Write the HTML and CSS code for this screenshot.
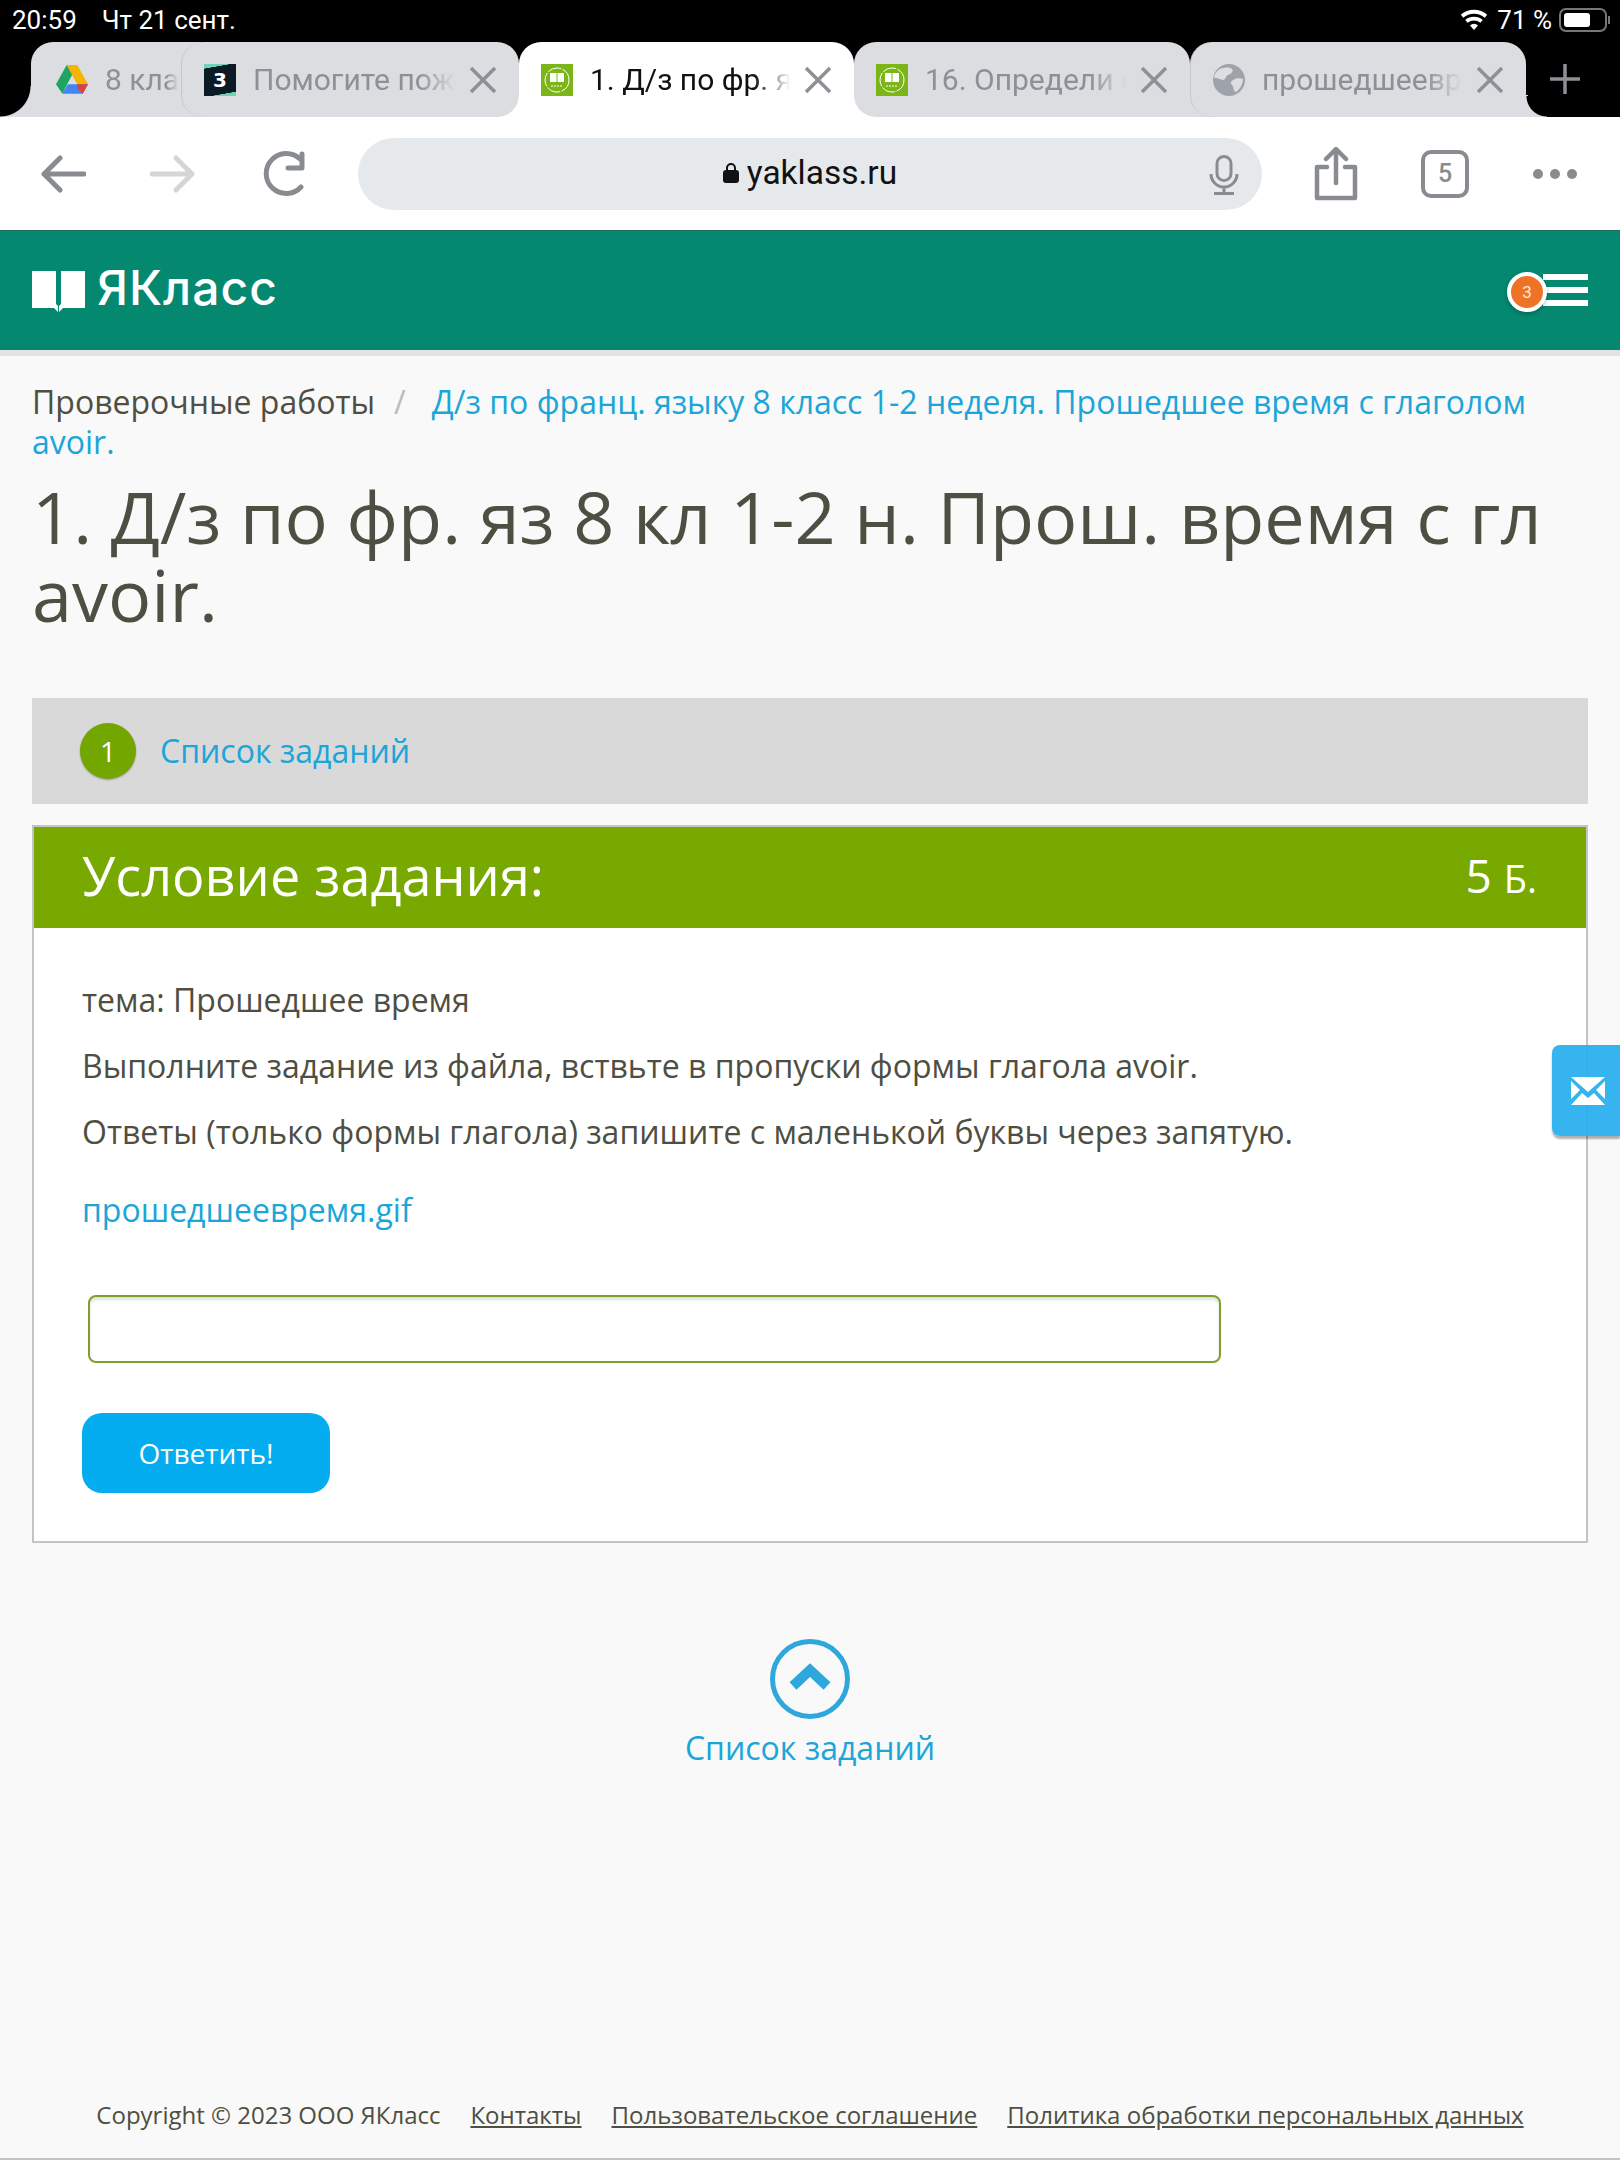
FILE: index.html
```html
<!DOCTYPE html>
<html lang="ru">
<head>
    <meta charset="UTF-8">
    <title>1. Д/з по фр. яз 8 кл 1-2 н. Прош. время с гл avoir.</title>
    <link rel="stylesheet" href="styles.css">
</head>
<body>

<div class="status-bar">
    <div class="status-left"><span>20:59</span><span>Чт 21 сент.</span></div>
    <div class="status-right">
        <svg class="wifi" viewBox="0 0 28 22"><path d="M14 21l-4-4.6a6 6 0 0 1 8 0zM7.700 13.800l-2.500-2.900a13.500 13.500 0 0 1 17.600 0l-2.500 2.900a9.600 9.600 0 0 0-12.600 0zM3.300 8.700L.8 5.800a20 20 0 0 1 26.400 0l-2.500 2.900a16.200 16.200 0 0 0-21.400 0z" fill="#fff"/></svg>
        <span>71 %</span>
        <div class="battery"><div class="battery-level"></div></div>
        <div class="battery-tip"></div>
    </div>
</div>

<div class="tab-strip">
    <div class="tab tab-first">
        <svg class="favicon" viewBox="0 0 30 28">
            <path d="M10 0h10L15 10 9.500 18z" fill="#f4b400"/>
            <path d="M20 0l10 18H20L10 0z" fill="#f4b400"/>
            <path d="M10 0l5 9-9 18-6-9z" fill="#1fa463"/>
            <path d="M6 27l5-9h19l-5 9z" fill="#4285f4"/>
            <path d="M20 18h10l-5 9-5-5z" fill="#db4437"/>
        </svg>
        <span class="tab-title">8 класс</span>
    </div>
    <div class="tab tab-second">
        <div class="favicon-znan"><span>3</span></div>
        <span class="tab-title">Помогите пожалуйста</span>
        <svg class="tab-close" viewBox="0 0 28 28"><path d="M2 2l24 24M26 2L2 26"/></svg>
    </div>
    <div class="tab tab-active">
        <svg class="favicon" viewBox="0 0 32 32">
            <rect width="32" height="32" fill="#7cb518"/>
            <circle cx="16" cy="16" r="12" fill="none" stroke="#fff" stroke-dasharray="14 1.500"/>
            <path d="M9 9h6.500v9H9zM16.500 9H23v9h-6.500z" fill="#fff"/>
            <path d="M10 22h12" stroke="#fff" stroke-dasharray="2 1"/>
        </svg>
        <span class="tab-title">1. Д/з по фр. яз 8 кл</span>
        <svg class="tab-close" viewBox="0 0 28 28"><path d="M2 2l24 24M26 2L2 26"/></svg>
    </div>
    <div class="tab">
        <svg class="favicon" viewBox="0 0 32 32">
            <rect width="32" height="32" fill="#7cb518"/>
            <circle cx="16" cy="16" r="12" fill="none" stroke="#fff" stroke-dasharray="14 1.500"/>
            <path d="M9 9h6.500v9H9zM16.500 9H23v9h-6.500z" fill="#fff"/>
            <path d="M10 22h12" stroke="#fff" stroke-dasharray="2 1"/>
        </svg>
        <span class="tab-title">16. Определи форму</span>
        <svg class="tab-close" viewBox="0 0 28 28"><path d="M2 2l24 24M26 2L2 26"/></svg>
    </div>
    <div class="tab tab-last">
        <svg class="favicon" viewBox="0 0 32 32">
            <circle cx="16" cy="16" r="16" fill="#9ea3aa"/>
            <path d="M7 5c5-2 10-2 12 0s-1 5-4 6-2 5-5 5-7-3-9-2c0-4 3-7 6-9zM20 16c3-2 7-2 10-1 0 5-3 10-7 13-3-1-2-5-4-7s-1-4 1-5z" fill="#dcdee1"/>
        </svg>
        <span class="tab-title">прошедшеевремя.gif</span>
        <svg class="tab-close" viewBox="0 0 28 28"><path d="M2 2l24 24M26 2L2 26"/></svg>
    </div>
    <svg class="tab-new" viewBox="0 0 30 30"><path d="M15 0v30M0 15h30"/></svg>
</div>

<div class="toolbar">
    <svg class="tool tool-back" viewBox="0 0 46 38"><path d="M44 19H4M20 3L4 19l16 16"/></svg>
    <svg class="tool tool-forward" viewBox="0 0 46 38"><path d="M2 19h40M26 3l16 16-16 16"/></svg>
    <svg class="tool tool-reload" viewBox="0 0 48 46"><path d="M41 36a20 20 0 1 1-1-28M42 3v14H28"/></svg>
    <div class="address-bar">
        <div class="address-text">
            <svg class="lock" viewBox="0 0 16 21"><path d="M4 9V6a4 4 0 0 1 8 0v3" fill="none" stroke="#111" stroke-width="2"/><rect y="8" width="16" height="13" rx="3" fill="#111"/></svg>
            <span>yaklass.ru</span>
        </div>
        <svg class="mic" viewBox="0 0 30 40"><rect x="8" y="1.500" width="14" height="24" rx="7"/><path d="M2 19a13 13 0 0 0 26 0M15 32v6M5 38.500h20"/></svg>
    </div>
    <svg class="tool tool-share" viewBox="0 0 44 54"><path d="M13 20H3v31h38V20H31M22 36V3M12 12l10-10 10 10"/></svg>
    <div class="tab-count">5</div>
    <div class="dots"><i></i><i></i><i></i></div>
</div>

<header class="site-header">
    <div class="logo">
        <svg class="logo-book" viewBox="0 0 53 42"><path d="M0 1h24v33l2 2v6l-4-4H0zM29 1h24v37H31l-4 4v-6l2-2z" fill="#fff"/></svg>
        <span class="logo-text">ЯКласс</span>
    </div>
    <div class="menu">
        <div class="menu-badge">3</div>
        <div class="menu-bars"><i></i><i></i><i></i></div>
    </div>
</header>

<main class="content">
    <div class="breadcrumb">
        <span>Проверочные работы</span><span class="breadcrumb-sep">/</span><a href="#">Д/з по франц. языку 8 класс 1-2 неделя. Прошедшее время с глаголом avoir.</a>
    </div>
    <h1 class="page-title">1. Д/з по фр. яз 8 кл 1-2 н. Прош. время с гл avoir.</h1>

    <div class="task-list">
        <div class="task-number">1</div>
        <a href="#">Список заданий</a>
    </div>

    <section class="task-card">
        <div class="task-head">
            <h2>Условие задания:</h2>
            <div class="task-points">5 <small>Б.</small></div>
        </div>
        <div class="task-body">
            <p>тема: Прошедшее время</p>
            <p>Выполните задание из файла, вствьте в пропуски формы глагола avoir.</p>
            <p>Ответы (только формы глагола) запишите с маленькой буквы через запятую.</p>
            <a class="file-link" href="#">прошедшеевремя.gif</a>
            <input class="answer" type="text">
            <button class="answer-btn" type="button">Ответить!</button>
        </div>
    </section>

    <a class="back-up" href="#">
        <svg viewBox="0 0 80 80"><circle cx="40" cy="40" r="37.500" fill="none" stroke="#2ea7dc" stroke-width="5"/><path d="M23 47l17-16 17 16" fill="none" stroke="#2ea7dc" stroke-width="10"/></svg>
        <span>Список заданий</span>
    </a>
</main>

<footer class="site-footer">
    <span>Copyright © 2023 ООО ЯКласс</span>
    <a href="#">Контакты</a>
    <a href="#">Пользовательское соглашение</a>
    <a href="#">Политика обработки персональных данных</a>
</footer>

<div class="mail-tab">
    <svg viewBox="0 0 34 28"><path d="M0 0h34L17 15zM0 4l9 9-9 9zM34 4v18l-9-9zM0 28l11-12 6 5 6-5 11 12z" fill="#fff"/></svg>
</div>

</body>
</html>
```

FILE: styles.css
```css
* {
    box-sizing: border-box;
}
html, body {
    margin: 0;
    padding: 0;
}
body {
    position: relative;
    display: flex;
    flex-direction: column;
    min-height: 2160px;
    background-color: #f9f9f9;
    color: #4e4e42;
    font-family: "Open Sans", sans-serif;
    font-size: 32px;
}
a {
    color: #1ba5d8;
    text-decoration: none;
}

/* ios status bar */
.status-bar {
    display: flex;
    justify-content: space-between;
    align-items: center;
    height: 42px;
    padding: 0 10px 2px 12px;
    background-color: #000;
    color: #fff;
    font-family: Roboto, sans-serif;
    font-size: 26px;
}
.status-left {
    display: flex;
    gap: 25px;
}
.status-right {
    display: flex;
    align-items: center;
    gap: 6px;
}
.wifi {
    width: 28px;
    height: 22px;
    margin-right: 3px;
}
.battery {
    width: 48px;
    height: 24px;
    padding: 3px;
    margin-left: 1px;
    border: 2px solid #777;
    border-radius: 7px;
}
.battery-level {
    width: 68%;
    height: 100%;
    background-color: #fff;
    border-radius: 3px;
}
.battery-tip {
    width: 2px;
    height: 8px;
    margin-left: -5px;
    background-color: #777;
}

/* browser tabs: the bottom band of the strip shows behind the rounded tab corners */
.tab-strip {
    position: relative;
    display: flex;
    height: 75px;
    padding-left: 31px;
    background:
        linear-gradient(#000, #000) top / 100% 53px no-repeat,
        linear-gradient(to right, #000 31px, #dcdde1 31px, #dcdde1 497px, #fff 497px, #fff 876px, #dcdde1 876px, #dcdde1 1528px, #000 1528px);
}
.tab {
    position: relative;
    display: flex;
    flex: none;
    align-items: center;
    width: 336px;
    height: 75px;
    padding: 0 22px;
    background-color: #dcdde1;
    border-radius: 22px;
    color: #8d9095;
    font-family: Roboto, sans-serif;
    font-size: 30px;
}
.tab-first {
    width: 170px;
    padding-left: 25px;
    border-radius: 22px 0 0 0;
}
.tab-first::before {
    content: '';
    position: absolute;
    left: -31px;
    bottom: 0;
    width: 31px;
    height: 31px;
    background: radial-gradient(circle at 0 0, #000 30px, #dcdde1 31px);
}
.tab-second {
    width: 338px;
    margin-left: -20px;
    border-left: 1px solid #c6c7cb;
}
.tab-active {
    width: 335px;
    background-color: #fff;
    color: #111;
}
.tab-last {
    border-left: 1px solid #c6c7cb;
    border-bottom-right-radius: 0;
}
.tab-last::after {
    content: '';
    position: absolute;
    right: -21px;
    bottom: 0;
    width: 21px;
    height: 21px;
    background: radial-gradient(circle at 100% 0, #000 20px, #dcdde1 21px);
}
.favicon {
    flex: none;
    width: 32px;
    height: 32px;
    margin-right: 17px;
}
.tab-title {
    flex: 1;
    min-width: 0;
    overflow: hidden;
    white-space: nowrap;
    -webkit-mask-image: linear-gradient(to right, #000 82%, transparent 100%);
    mask-image: linear-gradient(to right, #000 82%, transparent 100%);
}
.tab-close {
    flex: none;
    width: 28px;
    height: 28px;
    margin-left: 14px;
    fill: none;
    stroke: #8d9095;
    stroke-width: 3.500;
}
.tab-new {
    position: absolute;
    left: 1550px;
    top: 22px;
    width: 30px;
    height: 30px;
    fill: none;
    stroke: #8d9095;
    stroke-width: 3.500;
}
.favicon-znan {
    display: flex;
    flex: none;
    align-items: center;
    justify-content: center;
    width: 32px;
    height: 32px;
    margin-right: 17px;
    background: linear-gradient(170deg, #6fd3b5 12%, #0c1a26 13%, #0c1a26 88%, #6fd3b5 89%);
    color: #fff;
    font-family: "DejaVu Sans", sans-serif;
    font-size: 20px;
    font-weight: bold;
}

/* address bar row */
.toolbar {
    display: flex;
    align-items: center;
    height: 113px;
    padding-left: 40px;
    background-color: #fff;
}
.tool {
    flex: none;
    fill: none;
    stroke: #888c90;
    stroke-width: 5;
    stroke-linecap: round;
    stroke-linejoin: round;
}
.tool-back {
    width: 46px;
    height: 38px;
    margin-right: 64px;
}
.tool-forward {
    width: 46px;
    height: 38px;
    margin-right: 64px;
    stroke: #d3d5d7;
}
.tool-reload {
    width: 48px;
    height: 46px;
    margin-right: 50px;
}
.address-bar {
    position: relative;
    display: flex;
    flex: none;
    align-items: center;
    justify-content: center;
    width: 904px;
    height: 72px;
    background-color: #e6e9ec;
    border-radius: 36px;
}
.address-text {
    display: flex;
    align-items: center;
    gap: 8px;
    margin-top: -2px;
    color: #111;
    font-family: Roboto, sans-serif;
    font-size: 33.500px;
}
.lock {
    width: 16px;
    height: 21px;
}
.mic {
    position: absolute;
    right: 23px;
    top: 17px;
    width: 30px;
    height: 40px;
    fill: none;
    stroke: #888c90;
    stroke-width: 3;
}
.tool-share {
    width: 44px;
    height: 54px;
    margin-left: 52px;
    stroke-width: 4.500;
}
.tab-count {
    display: flex;
    flex: none;
    align-items: center;
    justify-content: center;
    width: 48px;
    height: 48px;
    margin-left: 63px;
    border: 4px solid #888c90;
    border-radius: 10px;
    color: #888c90;
    font-family: Roboto, sans-serif;
    font-size: 25px;
    font-weight: 500;
}
.dots {
    display: flex;
    gap: 7px;
    margin-left: 64px;
}
.dots i {
    width: 10px;
    height: 10px;
    background-color: #888c90;
    border-radius: 50%;
}

/* yaklass header */
.site-header {
    display: flex;
    justify-content: space-between;
    align-items: center;
    height: 120px;
    padding: 0 32px 2px;
    background-color: #058870;
    border-top: 1px solid #1d6a5c;
    box-shadow: 0 6px 0 #e2e3e3;
}
.logo {
    display: flex;
    align-items: center;
    gap: 12px;
}
.logo-book {
    width: 53px;
    height: 42px;
    margin-top: 2px;
}
.logo-text {
    margin-top: -4px;
    color: #fff;
    font-family: Inter, sans-serif;
    font-size: 48px;
    font-weight: 500;
    letter-spacing: 1px;
    line-height: 48px;
}
.menu {
    display: flex;
    align-items: center;
}
.menu-badge {
    position: relative;
    z-index: 1;
    display: flex;
    align-items: center;
    justify-content: center;
    width: 40px;
    height: 40px;
    margin-right: -4px;
    margin-top: 4px;
    background-color: #ee7326;
    border: 4px solid #fff;
    border-radius: 50%;
    box-shadow: 0 2px 4px rgba(0,0,0,0.25);
    color: #ffe9d8;
    font-family: Roboto, sans-serif;
    font-size: 17px;
}
.menu-bars {
    display: flex;
    flex-direction: column;
    gap: 7px;
    width: 45px;
}
.menu-bars i {
    height: 6px;
    background-color: #fff;
}

/* page */
.content {
    padding: 32px 32px 0;
}
.breadcrumb {
    font-size: 32px;
    line-height: 40px;
}
.breadcrumb-sep {
    margin: 0 26px 0 19px;
    color: #bbb;
}
.page-title {
    margin: 15px 0 0;
    color: #4e4e42;
    font-size: 72px;
    font-weight: 400;
    line-height: 78px;
}
.task-list {
    display: flex;
    align-items: center;
    gap: 24px;
    height: 106px;
    margin-top: 65px;
    padding-left: 48px;
    background-color: #d9d9d9;
}
.task-list a {
    margin-top: -2px;
}
.task-number {
    display: flex;
    align-items: center;
    justify-content: center;
    width: 56px;
    height: 56px;
    background-color: #74a600;
    border-radius: 50%;
    box-shadow: 0 1px 2px rgba(0,0,0,0.3);
    color: #fff;
    font-size: 28px;
}
.task-card {
    margin-top: 21px;
    background-color: #fff;
    border: 2px solid #c4c4c4;
}
.task-head {
    display: flex;
    justify-content: space-between;
    align-items: center;
    height: 101px;
    padding: 0 49px 5px 48px;
    background-color: #78a900;
    color: #fff;
}
.task-head h2 {
    margin: 0;
    font-size: 54px;
    font-weight: 400;
}
.task-points {
    font-size: 46px;
}
.task-points small {
    font-size: 38px;
}
.task-body {
    display: flex;
    flex-direction: column;
    align-items: flex-start;
    padding: 50px 48px 48px;
}
.task-body p {
    margin: 0 0 22px;
    line-height: 44px;
}
.file-link {
    margin-top: 12px;
    line-height: 44px;
}
.answer {
    width: 1133px;
    height: 68px;
    margin: 63px 0 0 6px;
    background-color: #fff;
    border: 2px solid #7f9f2a;
    border-radius: 8px;
    box-shadow: inset 0 3px 3px rgba(0,0,0,0.12);
}
.answer-btn {
    width: 248px;
    height: 80px;
    margin-top: 50px;
    background-color: #04adef;
    border: 0;
    border-radius: 20px;
    color: #fff;
    font-family: "Open Sans", sans-serif;
    font-size: 28px;
}
.back-up {
    display: flex;
    flex-direction: column;
    align-items: center;
    gap: 7px;
    margin-top: 96px;
}
.back-up svg {
    width: 80px;
    height: 80px;
}

/* footer */
.site-footer {
    display: flex;
    justify-content: center;
    gap: 30px;
    margin-top: auto;
    padding-bottom: 25px;
    border-bottom: 2px solid #c4c4c4;
    color: #4e4e42;
    font-size: 24px;
    line-height: 36px;
}
.site-footer a {
    color: #4e4e42;
    text-decoration: underline;
}

/* feedback tab on the right edge */
.mail-tab {
    position: absolute;
    right: 0;
    top: 1045px;
    display: flex;
    align-items: center;
    justify-content: center;
    width: 68px;
    height: 91px;
    padding-left: 3px;
    background-color: rgba(42,176,238,0.95);
    border-radius: 8px 0 0 8px;
    box-shadow: 0 3px 2px rgba(0,0,0,0.3);
}
.mail-tab svg {
    width: 34px;
    height: 28px;
}
```
